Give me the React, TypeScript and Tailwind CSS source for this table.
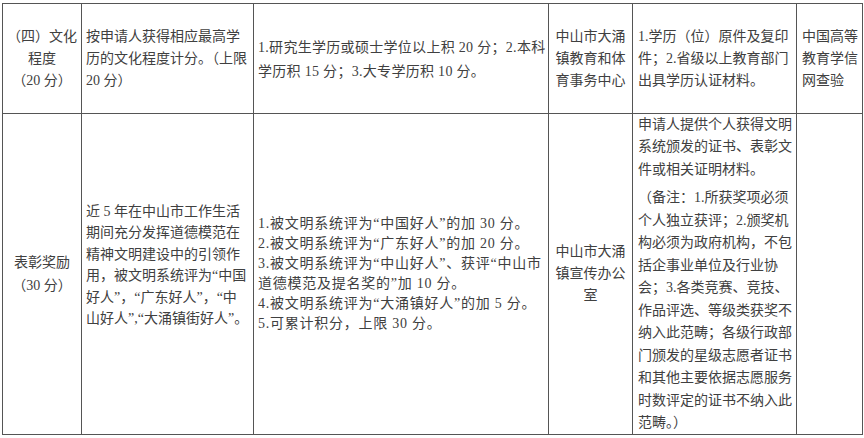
import React from "react";

const Lines = ({ lines, className = "" }: { lines: string[]; className?: string }) => (
  <div className={className}>
    {lines.map((l, i) => (
      <div key={i} className="whitespace-nowrap">
        {l}
      </div>
    ))}
  </div>
);

export default function App() {
  return (
    <div
      className="w-[864px] h-[438px] bg-white pl-[2px] pt-[3px] text-[#404040] text-[14px]"
      style={{ fontFamily: '"Liberation Serif", "Noto Sans CJK SC", serif' }}
    >
      <div className="grid w-fit grid-cols-[78px_171px_294px_83px_163px_65px] grid-rows-[109px_320px] gap-px bg-[#555] p-px">
        {/* Row 1 */}
        <div className="bg-white flex items-center justify-center text-center leading-[22px]">
          <Lines lines={["（四）文化", "程度", "（20 分）"]} />
        </div>
        <div className="bg-white flex items-center pl-[4px] leading-[22px]">
          <Lines lines={["按申请人获得相应最高学", "历的文化程度计分。（上限", "20 分）"]} />
        </div>
        <div className="bg-white flex items-center pl-[4px] pt-[3px] leading-[24px] tracking-[0.3px]">
          <Lines lines={["1.研究生学历或硕士学位以上积 20 分；2.本科", "学历积 15 分；3.大专学历积 10 分。"]} />
        </div>
        <div className="bg-white flex items-center justify-center text-center leading-[22px]">
          <Lines lines={["中山市大涌", "镇教育和体", "育事务中心"]} />
        </div>
        <div className="bg-white flex items-center pl-[5px] leading-[22px]">
          <Lines lines={["1.学历（位）原件及复印", "件；2.省级以上教育部门", "出具学历认证材料。"]} />
        </div>
        <div className="bg-white flex items-center pl-[5px] leading-[22px]">
          <Lines lines={["中国高等", "教育学信", "网查验"]} />
        </div>

        {/* Row 2 */}
        <div className="bg-white flex items-center justify-center text-center leading-[23px]">
          <Lines lines={["表彰奖励", "（30 分）"]} />
        </div>
        <div className="bg-white flex items-center pl-[4px] pb-[18px] leading-[21.5px]">
          <Lines
            lines={[
              "近 5 年在中山市工作生活",
              "期间充分发挥道德模范在",
              "精神文明建设中的引领作",
              "用，被文明系统评为“中国",
              "好人”，“广东好人”，“中",
              "山好人”,“大涌镇街好人”。",
            ]}
          />
        </div>
        <div className="bg-white flex items-center pl-[4px] leading-[20px] tracking-[0.75px]">
          <Lines
            lines={[
              "1.被文明系统评为“中国好人”的加 30 分。",
              "2.被文明系统评为“广东好人”的加 20 分。",
              "3.被文明系统评为“中山好人”、获评“中山市",
              "道德模范及提名奖的”加 10 分。",
              "4.被文明系统评为“大涌镇好人”的加 5 分。",
              "5.可累计积分，上限 30 分。",
            ]}
          />
        </div>
        <div className="bg-white flex items-center justify-center text-center leading-[22px]">
          <Lines lines={["中山市大涌", "镇宣传办公", "室"]} />
        </div>
        <div className="bg-white flex flex-col justify-center pl-[5px] leading-[22.5px]">
          <Lines lines={["申请人提供个人获得文明", "系统颁发的证书、表彰文", "件或相关证明材料。"]} />
          <Lines
            className="mt-[6px]"
            lines={[
              "（备注：1.所获奖项必须",
              "个人独立获评；2.颁奖机",
              "构必须为政府机构，不包",
              "括企事业单位及行业协",
              "会；3.各类竞赛、竞技、",
              "作品评选、等级类获奖不",
              "纳入此范畴；各级行政部",
              "门颁发的星级志愿者证书",
              "和其他主要依据志愿服务",
              "时数评定的证书不纳入此",
              "范畴。）",
            ]}
          />
        </div>
        <div className="bg-white" />
      </div>
    </div>
  );
}
